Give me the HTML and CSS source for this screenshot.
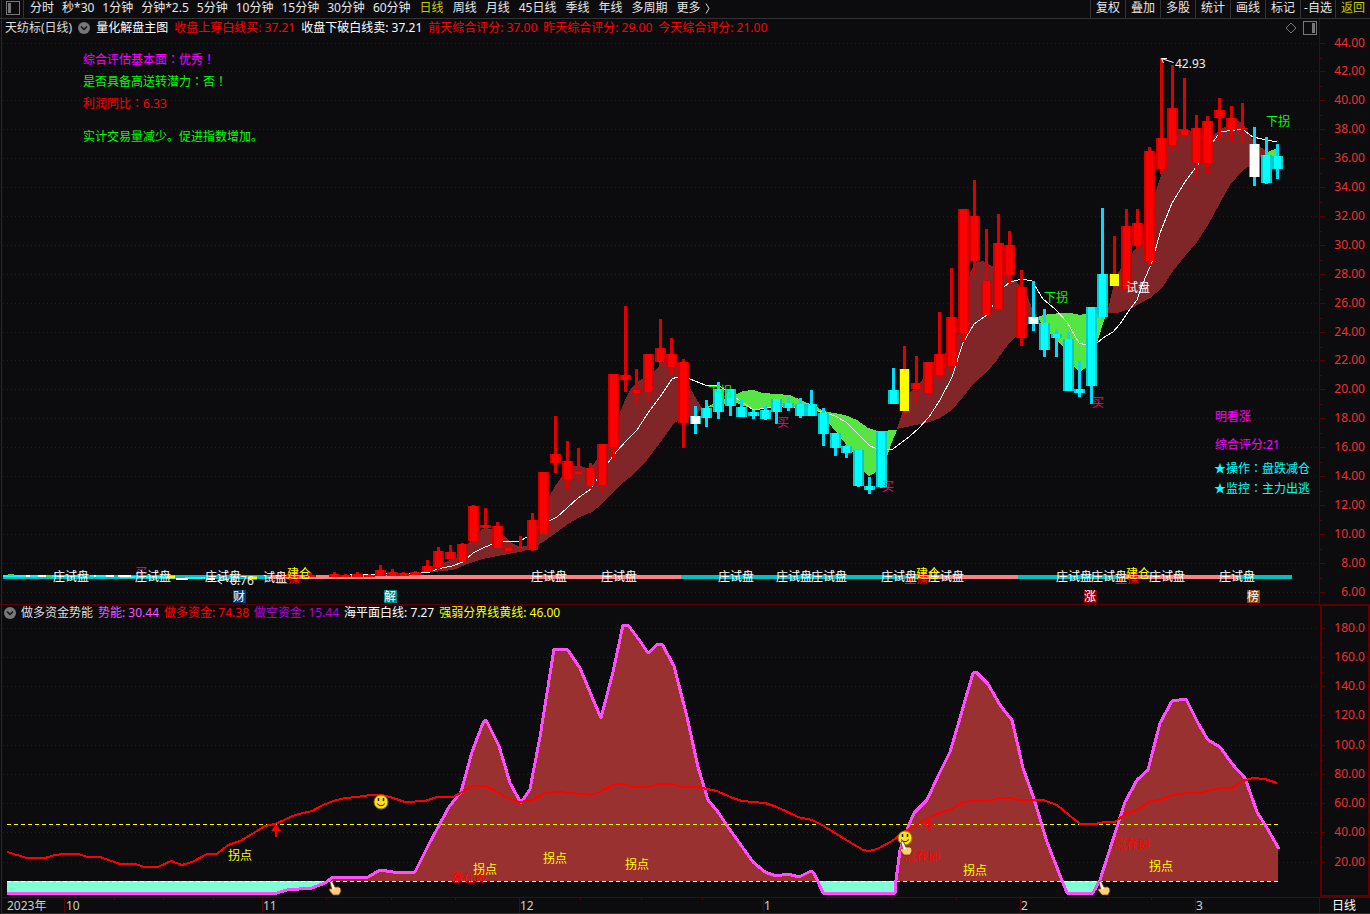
FILE: index.html
```html
<!DOCTYPE html>
<html lang="zh-CN">
<head>
<meta charset="utf-8">
<title>天纺标(日线)</title>
<link rel="stylesheet" href="styles.css">
</head>
<body>
<header class="toolbar">
  <button class="layout-btn" aria-label="布局"><svg width="14" height="14" viewBox="0 0 14 14"><rect x=".5" y=".5" width="13" height="13" fill="none" stroke="#777"/><rect x="2" y="2" width="3" height="10" fill="#777"/></svg></button>
  <nav class="periods">
    <button>分时</button><button>秒*30</button><button>1分钟</button><button>分钟*2.5</button><button>5分钟</button><button>10分钟</button><button>15分钟</button><button>30分钟</button><button>60分钟</button>
  </nav>
  <nav class="periods long">
    <button class="active">日线</button><button>周线</button><button>月线</button><button>45日线</button><button>季线</button><button>年线</button><button>多周期</button><button class="more">更多 <svg width="5" height="11" viewBox="0 0 5 11"><path d="M1 .5L4 5.5 1 10.5" fill="none" stroke="#ddd"/></svg></button>
  </nav>
  <nav class="tools">
    <button>复权</button><button>叠加</button><button>多股</button><button>统计</button><button>画线</button><button>标记</button><button>-自选</button><button class="active">返回</button>
  </nav>
</header>

<main>
  <section class="panel">
    <div class="info main-info">
      <span class="grey">天纺标(日线)</span>
      <button class="fold" aria-label="指标菜单"><svg width="12" height="12" viewBox="0 0 12 12"><circle cx="6" cy="6" r="6" fill="#777"/><path d="M3 4.5L6 7.5 9 4.5" fill="none" stroke="#111" stroke-width="1.5"/></svg></button>
      <span class="white">量化解盘主图</span>
      <span class="red">收盘上穿白线买: 37.21</span>
      <span class="white">收盘下破白线卖: 37.21</span>
      <span class="red">前天综合评分: 37.00</span>
      <span class="red">昨天综合评分: 29.00</span>
      <span class="red">今天综合评分: 21.00</span>
      <span class="info-end">
        <button class="fold" aria-label="标记"><svg width="12" height="12" viewBox="0 0 12 12"><path d="M6 1L11 6 6 11 1 6Z" fill="none" stroke="#777"/></svg></button>
        <button class="fold" aria-label="侧栏"><svg width="14" height="14" viewBox="0 0 14 14"><rect x=".5" y=".5" width="13" height="13" fill="none" stroke="#777"/><rect x="9" y="2" width="3" height="10" fill="#777"/></svg></button>
      </span>
    </div>
    <svg class="chart" viewBox="0 37 1370 567" role="img" aria-label="日线主图">
      <g id="price-grid"></g>
      <g class="band-up">
        <path d="M420 572L438 566 450 560 461 556 470 541 480 531 485 528 496 530 503 535 510 542 520 547 531 545 540 525 549 497 555 486 563 475 570 466 580 466 590 469 600 455 610 440 619 415 625 400 631 388 640 380 650 376 658 367 665 360 677 362 683 366 690 388 702 408 694 416 675 422 662 440 647 460 633 475 620 485 610 495 602 504 592 512 580 517 568 524 553 535 543 542 533 548 520 552 497 556 483 559 470 563 453 570 433 572Z"/>
        <path d="M897 429L903 410 910 392 922 380 930 367 943 357 957 337 965 303 970 273 975 263 983 261 992 266 1007 275 1018 283 1027 295 1032 308 1037 316 1027 325 1015 337 1007 346 997 360 987 372 974 383 963 397 952 410 940 418 930 422Z"/>
        <path d="M1107 313L1113 288 1118 273 1133 252 1143 240 1155 193 1162 173 1168 143 1177 129 1187 129 1195 133 1213 135 1223 128 1235 121 1242 122 1247 130 1253 140 1262 148 1267 153 1256 160 1248 167 1242 171 1230 185 1220 203 1208 225 1197 242 1185 256 1173 271 1162 288 1150 298 1130 309 1117 313Z"/>
      </g>
      <g class="band-down">
        <path d="M703 409L715 403 737 394 743 391 753 390 763 393 790 395 803 401 817 407 823 411 845 415 857 420 868 428 878 431 897 430 892 442 887 457 875 473 869 476 864 472 853 453 845 443 837 433 828 422 820 412 800 407 780 406 755 410 737 403 720 405Z"/>
        <path d="M1037 317L1043 315 1060 313 1070 313 1080 315 1088 313 1106 316 1104 320 1098 340 1087 367 1080 372 1073 366 1067 353 1062 345 1053 337 1043 325Z"/>
        <path d="M1266 153L1277 148 1277 157 1267 156Z"/>
      </g>
      <path class="ma" d="M205 577L300 576 350 575 420 573 430 572 437 569 452 566 463 562 473 553 485 547 493 544 505 541 520 541 527 537 538 528 549 521 557 517 567 508 578 498 591 489 598 477 608 463 617 451 627 440 637 430 648 413 660 397 672 379 677 377 690 379 705 385 718 385 733 396 752 409 755 410 777 406 807 409 823 412 835 416 846 422 857 433 870 446 875 448 887 449 893 449 910 436 918 429 929 417 940 400 952 377 963 343 974 324 987 315 993 305 1003 288 1010 282 1022 279 1032 281 1043 299 1055 309 1067 322 1079 343 1086 345 1097 343 1103 338 1113 332 1120 324 1130 309 1137 300 1143 283 1152 262 1160 233 1172 203 1185 182 1197 166 1213 142 1220 132 1242 129 1253 137 1262 139 1277 142"/>
      <g class="strip">
        <path class="s-down" d="M3 577H270M681 577H918M1018 577H1126M1238 577H1292"/>
        <path class="s-up" d="M270 577H681M918 577H1018M1126 577H1238"/>
        <path class="s-cyan" d="M3 576H80M90 576H110M120 577H165M185 578H205"/>
        <path class="s-white" d="M26 576H30M38 576H46M94 576H96M106 576H114M118 576H131M176 579H188M206 579H215"/>
        <path class="s-green" d="M8 575H14M46 576H52"/>
        <path class="s-yellow" d="M167 577H175M248 578H257"/>
      </g>
      <g id="candles"></g>
      <g id="price-labels"></g>
      <g stroke="#fff" fill="none"><path d="M1161.500 58.500L1173.500 62.500M1167 58.500H1161.500L1163.500 63"/><path d="M229 579L218 581M222 577L217.500 581 222 584"/></g>
      <g id="badges"></g>
    </svg>
  </section>

  <section class="panel lower">
    <div class="info sub-info">
      <button class="fold" aria-label="指标菜单"><svg width="12" height="12" viewBox="0 0 12 12"><circle cx="6" cy="6" r="6" fill="#777"/><path d="M3 4.5L6 7.5 9 4.5" fill="none" stroke="#111" stroke-width="1.5"/></svg></button>
      <span class="grey">做多资金势能</span>
      <span class="pink">势能: 30.44</span>
      <span class="red">做多资金: 74.38</span>
      <span class="purple">做空资金: 15.44</span>
      <span class="white">海平面白线: 7.27</span>
      <span class="yellow">强弱分界线黄线: 46.00</span>
    </div>
    <svg class="chart" viewBox="0 622 1370 275" role="img" aria-label="做多资金势能">
      <defs>
        <clipPath id="above"><rect x="0" y="620" width="1278" height="261"/></clipPath>
        <clipPath id="below"><rect x="0" y="881" width="1278" height="16"/></clipPath>
        <path id="energy" d="M7 893L277 893 287 890 312 888 325 883 333 877 368 877 380 870 393 872 415 872 430 842 449 807 461 792 472 752 483 723 486 720 499 746 510 783 521 803 530 789 540 737 554 649 567 649 580 668 592 697 601 718 613 672 623 625 628 625 640 641 648 653 658 644 662 644 674 666 687 717 698 767 708 800 718 812 728 827 753 862 765 872 776 876 788 874 799 877 811 871 814 873 823 893 895 893 896 880 900 850 908 827 914 813 927 800 939 774 950 752 960 718 973 673 976 672 988 684 1000 705 1012 720 1023 768 1034 799 1047 842 1061 878 1067 893 1093 893 1100 880 1117 827 1125 802 1137 780 1148 770 1160 723 1172 701 1186 699 1198 723 1208 740 1220 747 1233 765 1245 778 1257 812 1267 828 1279 849"/>
        <g id="smiley"><circle r="7" fill="#ffe01a" stroke="#8a7800"/><path d="M-2.500-4V-1M2.500-4V-1" stroke="#222" stroke-width="1.500"/><path d="M-4 1.500Q0 6 4 1.500" fill="none" stroke="#222"/></g>
        <g id="hand"><path d="M-5-6Q-4-8-2.500-6L0-1 4-1Q6 0 6 3L4 7H-2L-6 2Q-6 0-3.500 1Z" fill="#ffcf7a" stroke="#6b3a10" stroke-width=".8"/><path d="M-4-6L-1 1" stroke="#fff" stroke-width="1.500"/></g>
      </defs>
      <g id="energy-grid"></g>
      <path clip-path="url(#above)" fill="#9a3131" d="" id="area-up"/>
      <path clip-path="url(#below)" fill="#7fffd4" d="" id="area-down"/>
      <path class="sea" d="M7 881.500H1278"/>
      <path class="divide" d="M7 824.500H1278"/>
      <use href="#energy" class="energy"/>
      <path class="funds" d="M7 852L27 858 45 858 55 855 63 854 78 854 88 857 100 857 120 864 135 864 145 867 158 867 171 861 182 865 192 862 207 854 217 854 228 845 240 841 252 834 265 826 275 824 295 815 312 811 323 805 333 801 345 798 357 797 370 795 382 795 390 797 405 802 425 801 437 797 453 797 462 792 473 786 486 786 497 792 510 799 520 802 532 800 545 793 560 792 592 795 602 791 613 785 623 784 633 787 648 787 658 784 672 784 682 787 697 787 717 791 730 797 742 801 765 803 777 807 798 817 812 820 822 825 835 833 848 841 863 850 869 851 877 849 892 841 905 831 915 826 928 818 942 812 950 810 963 802 972 801 988 801 1000 798 1010 798 1020 800 1043 800 1057 805 1080 824 1095 824 1105 822 1115 822 1125 814 1137 810 1150 801 1160 800 1173 795 1187 793 1200 793 1220 788 1232 788 1243 781 1253 778 1265 779 1277 783"/>
      <path class="mark" d="M276 837V829M929 831V821"/>
      <path fill="#f00" d="M276 824L281 831H271Z"/>
      <path d="M924.500 825.500L929 821 933.500 825.500" fill="none" stroke="#f00" stroke-width="2"/>
      <g id="energy-labels"></g>
      <use href="#smiley" x="381" y="802"/><use href="#smiley" x="905" y="838"/>
      <use href="#hand" x="335" y="888"/><use href="#hand" x="906" y="848"/><use href="#hand" x="1104" y="888"/>
    </svg>
    <svg class="chart" viewBox="0 897 1370 17" role="img" aria-label="时间轴"><g id="time-axis"></g></svg>
  </section>
</main>
<script src="script.js"></script>
</body>
</html>
```
FILE: styles.css
```css
* { box-sizing: border-box; }
body {
  margin: 0;
  background: #0c0c0e linear-gradient(#2a2a2c, #2a2a2c) 1px 0 / 1px 100% no-repeat;
  color: #e6e6e6;
  font: 12px/16px "Noto Sans", "Noto Sans CJK SC", sans-serif;
}
button {
  margin: 0;
  padding: 0;
  border: 0;
  background: none;
  color: inherit;
  font: inherit;
  white-space: nowrap;
  cursor: pointer;
}
svg { display: block; }

.toolbar {
  display: flex;
  height: 19px;
  border-bottom: 1px solid #333;
}
.layout-btn {
  width: 24px;
  padding: 0 0 0 6px;
  border-right: 1px solid #333;
}
.layout-btn svg { margin-top: -2px; }
.periods {
  display: flex;
  gap: 8px;
  padding-left: 6px;
}
.periods.long { gap: 9px; padding-left: 9px; }
.periods button { height: 16px; }
.more { display: flex; align-items: center; gap: 5px; }
.tools {
  display: grid;
  grid-template-columns: repeat(8, 35px);
  margin-left: auto;
}
.tools button {
  height: 18px;
  padding-bottom: 2px;
  border-left: 1px solid #333;
}
.active { color: #c8c800; }

.panel { overflow: hidden; }
.lower { border-top: 1px solid #5a0000; }
.info {
  display: flex;
  align-items: center;
  white-space: nowrap;
}
.main-info { height: 18px; gap: 6px; padding-left: 5px; }
.sub-info { height: 17px; gap: 5px; padding: 0 0 2px 4px; }
.info-end {
  display: flex;
  align-items: center;
  gap: 6px;
  margin-left: auto;
  margin-right: 53px;
}
.grey { color: #ddd; }
.white { color: #fff; }
.red { color: #f00; }
.pink { color: #ff4dff; }
.purple { color: #b400e0; }
.yellow { color: #ff0; }

.chart { width: 100%; height: auto; overflow: visible; }
.chart text { white-space: pre; }
.punct { font-family: "Noto Sans CJK TC", sans-serif; }
.grid-line { stroke: #4c0a0a; stroke-dasharray: 1 3; }
.axis { stroke: #5e0000; }
.frame { stroke: #5e0000; stroke-width: 2; fill: none; }
.axis-text { fill: #f03030; text-anchor: end; }
.band-up { fill: #802628; shape-rendering: crispEdges; }
.band-down { fill: #56e644; shape-rendering: crispEdges; }
.ma { fill: none; stroke: #fff; shape-rendering: crispEdges; }
.strip path { fill: none; stroke-width: 2; }
.strip .s-down { stroke: #00c0c0; stroke-width: 4; }
.strip .s-up { stroke: #ff8080; stroke-width: 4; }
.strip .s-cyan { stroke: #0ff; }
.strip .s-white { stroke: #fff; }
.strip .s-green { stroke: #4d4; }
.strip .s-yellow { stroke: #ff0; stroke-width: 3; }
.sea { stroke: #fff; stroke-dasharray: 4 3; }
.divide { stroke: #ff0; stroke-dasharray: 4 3; }
.energy { fill: none; stroke: #ff4dff; stroke-width: 3; stroke-linejoin: round; shape-rendering: crispEdges; }
.funds { fill: none; stroke: #f00; stroke-width: 2; stroke-linejoin: round; shape-rendering: crispEdges; }
.mark { stroke: #f00; stroke-width: 2; }
```
FILE: script.js
```js
const NS = "http://www.w3.org/2000/svg";

function add(parent, name, attrs, text) {
  const node = document.createElementNS(NS, name);
  for (const key in attrs) node.setAttribute(key, attrs[key]);
  if (text !== undefined) node.textContent = text;
  parent.appendChild(node);
  return node;
}
const byId = (id) => document.getElementById(id);
const line = (g, x1, y1, x2, y2, cls) => add(g, "line", { x1, y1, x2, y2, class: cls });

// Price scale
const priceGrid = byId("price-grid");
line(priceGrid, 1319.5, 19, 1319.5, 604, "axis");
for (let value = 44; value >= 6; value -= 2) {
  const y = Math.floor(43 + (44 - value) * 14.45) + 0.5;
  line(priceGrid, 3, y, 1318, y, "grid-line");
  line(priceGrid, 1320, y, 1325, y, "axis");
  if (value > 6) line(priceGrid, 1320, y + 15, 1322, y + 15, "axis");
  add(priceGrid, "text", { x: 1365, y: y + 3.5, class: "axis-text" }, value.toFixed(2));
}

// Candles: bars back from the latest, high, body top, body bottom, low, kind
const candles = [
  [85,574,575,577,577,"r"],[83,573,575,577,577,"r"],[81,572,574,577,577,"r"],[80,574,575,577,577,"r"],
  [79,572,574,577,577,"r"],[78,574,575,577,577,"r"],[77,565,570,576,576,"r"],[76,569,572,576,576,"r"],
  [75,572,573,576,576,"r"],[74,571,572,575,575,"r"],
  [73,560,566,572,572,"r"],[72,547,551,567,569,"r"],[71,545,552,559,559,"r"],[70,543,544,562,562,"r"],
  [69,505,506,541,543,"r"],[68,508,525,528,528,"r"],[67,522,526,548,548,"r"],[66,544,548,551,554,"r"],
  [65,536,547,548,552,"r"],[64,513,520,550,551,"r"],[63,472,472,534,534,"r"],[62,416,454,463,473,"r"],
  [61,441,461,479,489,"r"],[60,448,472,474,482,"r"],[59,463,468,486,489,"r"],[58,444,444,485,493,"r"],
  [57,374,374,447,459,"r"],[56,306,375,380,392,"r"],[55,369,390,393,404,"r"],[54,354,354,392,402,"r"],
  [53,319,348,362,367,"r"],[52,338,354,367,376,"r"],[51,359,362,423,448,"r"],[50,406,416,424,434,"w"],
  [49,400,408,418,427,"c"],[48,382,389,412,419,"c"],[47,389,389,406,416,"c"],[46,400,407,417,417,"c"],
  [45,410,412,416,419,"c"],[44,406,410,419,420,"c"],[43,399,399,412,424,"c"],[42,397,403,408,411,"c"],
  [41,398,404,416,418,"c"],[40,390,404,416,416,"c"],[39,408,413,434,446,"c"],[38,433,433,448,456,"c"],
  [37,445,446,453,458,"c"],[36,449,450,486,487,"c"],[35,477,486,490,494,"c"],[34,432,432,487,488,"c"],
  [33,368,390,404,404,"c"],[32,346,369,411,418,"y"],[31,356,383,389,404,"r"],[30,362,362,393,398,"r"],
  [29,312,354,375,379,"r"],[28,268,317,366,372,"r"],[27,209,209,333,342,"r"],[26,180,216,261,275,"r"],
  [25,229,281,315,315,"r"],[24,214,243,309,309,"r"],[23,231,245,275,283,"r"],[22,270,287,338,346,"r"],
  [21,281,317,324,331,"w"],[20,309,323,350,357,"c"],[19,329,334,338,357,"c"],[18,332,339,391,391,"c"],
  [17,361,389,393,397,"c"],[16,307,307,386,404,"c"],[15,208,274,317,320,"c"],[14,236,274,286,290,"y"],
  [13,209,226,289,289,"r"],[12,209,223,246,249,"r"],[11,147,151,261,266,"r"],[10,58,138,169,174,"r"],
  [9,65,108,145,152,"r"],[8,78,130,135,137,"r"],[7,115,128,163,179,"r"],[6,116,121,163,174,"r"],
  [5,98,110,118,140,"r"],[4,106,118,130,142,"r"],[3,103,128,129,144,"r"],[2,127,144,177,186,"w"],
  [1,137,155,183,184,"c"],[0,144,156,169,179,"c"]
];
// wick, body edge, body centre, centre inset
const kinds = {
  r: ["#dc0000", "#d00000", "#ff0000", 2],
  c: ["#00dcff", "#00cccc", "#00ffff", 2],
  w: ["#00dcff", "#00cccc", "#ffffff", 1],
  y: ["#dc0000", "#b00000", "#ffff00", 1]
};
const candleGroup = byId("candles");
for (const [back, high, top, bottom, low, kind] of candles) {
  const x = Math.round(1277.2 - 11.65 * back);
  const [wick, edge, fill, inset] = kinds[kind];
  add(candleGroup, "rect", { x: x - 1, y: high, width: 3, height: low - high, fill: wick });
  add(candleGroup, "rect", { x: x - 5, y: top, width: 11, height: bottom - top, fill: edge });
  add(candleGroup, "rect", { x: x - 5 + inset, y: top, width: 11 - 2 * inset, height: bottom - top, fill });
}

// Full-width colons and exclamation marks use the centred forms.
function labels(group, fill, text, points) {
  for (const [x, y] of points) {
    const node = add(group, "text", { x, y, fill });
    for (const part of text.split(/([：！])/)) {
      if (part) add(node, "tspan", /[：！]/.test(part) ? { class: "punct", lang: "zh-TW" } : {}, part);
    }
  }
}
const price = byId("price-labels");
labels(price, "#f0f", "综合评估基本面：优秀！", [[83, 64]]);
labels(price, "#0f0", "是否具备高送转潜力：否！", [[83, 86]]);
labels(price, "#f00", "利润同比：6.33", [[83, 108]]);
labels(price, "#0f0", "实计交易量减少。促进指数增加。", [[83, 141]]);
labels(price, "#0f0", "下拐", [[708, 396], [1044, 302], [1266, 126]]);
labels(price, "#ff0084", "买", [[135, 577], [777, 427], [882, 491], [1092, 407]]);
labels(price, "#f00", "主操", [[276, 583], [904, 583], [1115, 583]]);
labels(price, "#fff", "庄试盘", [53, 135, 205, 531, 601, 718, 776, 811, 881, 928, 1056, 1091, 1149, 1219].map((x) => [x, 581]));
labels(price, "#fff", "试盘", [[263, 582], [1126, 292]]);
labels(price, "#ff0", "建仓", [[287, 578], [916, 578], [1126, 578]]);
labels(price, "#eee", "6.76", [[230, 585]]);
labels(price, "#eee", "42.93", [[1175, 68]]);
labels(price, "#f0f", "明看涨", [[1215, 421]]);
labels(price, "#f0f", "综合评分:21", [[1215, 449]]);
labels(price, "#0ff", "★操作：盘跌减仓", [[1214, 473]]);
labels(price, "#0ff", "★监控：主力出逃", [[1214, 493]]);

for (const [x, fill, text] of [[233, "#003c78", "财"], [384, "#008080", "解"], [1084, "#8c0000", "涨"], [1247, "#8c4600", "榜"]]) {
  add(byId("badges"), "rect", { x, y: 590, width: 13, height: 13, fill });
  add(byId("badges"), "text", { x, y: 601, fill: "#fff" }, text);
}

// Energy scale
const energyGrid = byId("energy-grid");
add(energyGrid, "path", { d: "M1321 605V896H1369V605", class: "frame" });
line(energyGrid, 1321, 605.5, 1370, 605.5, "axis");
for (let value = 180; value >= 20; value -= 20) {
  const y = Math.floor(628 + (180 - value) * 1.4625) + 0.5;
  line(energyGrid, 3, y, 1318, y, "grid-line");
  line(energyGrid, 1320, y, 1325, y, "axis");
  if (value > 20) line(energyGrid, 1320, y + 15, 1323, y + 15, "axis");
  add(energyGrid, "text", { x: 1365, y: y + 3.5, class: "axis-text" }, value.toFixed(value >= 100 ? 1 : 2));
}
const outline = byId("energy").getAttribute("d") + " 1279 881 7 881Z";
byId("area-up").setAttribute("d", outline);
byId("area-down").setAttribute("d", outline);

const energy = byId("energy-labels");
labels(energy, "#f00", "涨在即", [[451, 882], [904, 861], [1114, 849]]);
labels(energy, "#ff0", "拐点", [[228, 860], [473, 874], [543, 863], [625, 869], [963, 875], [1149, 871]]);

// Time axis
const time = byId("time-axis");
line(time, 2, 897.5, 1370, 897.5, "axis");
for (const x of [64, 262, 519, 763, 1020, 1195, 1319]) line(time, x + 0.5, 898, x + 0.5, 913, "axis");
for (const x of [114, 163, 213, 326, 391, 455, 580, 641, 702, 827, 892, 956, 1064, 1108, 1151]) line(time, x + 0.5, 898, x + 0.5, 900, "axis");
for (const [x, text] of [[7, "2023年"], [66, "10"], [263, "11"], [520, "12"], [764, "1"], [1021, "2"], [1196, "3"]]) {
  add(time, "text", { x, y: 910, fill: "#ccc" }, text);
}
add(time, "text", { x: 1332, y: 910, fill: "#fff" }, "日线");
add(time, "line", { x1: 2, y1: 913.5, x2: 1370, y2: 913.5, stroke: "#333" });
```
